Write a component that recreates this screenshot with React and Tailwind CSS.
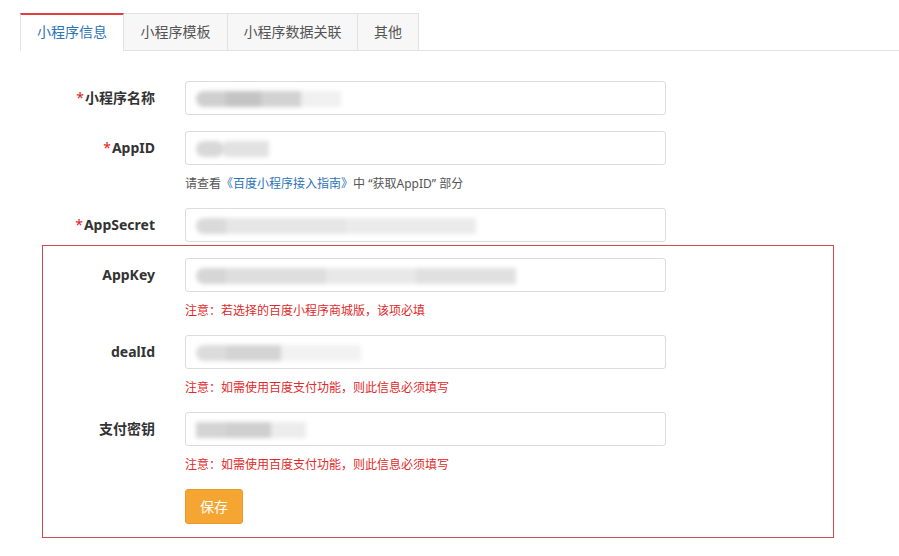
import React from 'react';

const font = { fontFamily: '"Noto Sans", "Noto Sans CJK SC", sans-serif' };

const tabs = [
    { name: '小程序信息', w: 'w-[104px]', active: true },
    { name: '小程序模板', w: 'w-[104px]' },
    { name: '小程序数据关联', w: 'w-[130px]' },
    { name: '其他', w: 'w-[61px]' },
];

// blurred placeholder for masked values
const Masked = ({ bars }) => (
    <div className="absolute left-[10px] top-[9px] flex items-center blur-[2px]">
        {bars.map((b, i) => (
            <div key={i} className={`h-[16px] ${b}`} />
        ))}
    </div>
);

const Row = ({ label, required, labelW, bars, help, helpClass, last }) => (
    <div className={last ? '' : help ? 'mb-[14px]' : 'mb-[16px]'}>
        <div className="flex items-center">
            <div className={`${labelW} shrink-0 text-right text-[14px] font-bold text-[#333] leading-5`}>
                {required && <span className="text-[#e02020] font-normal mr-[1px]">*</span>}
                {label}
            </div>
            <div className="relative ml-[30px] h-[34px] w-[481px] rounded-[3px] border border-[#dcdcdc] bg-white">
                <Masked bars={bars} />
            </div>
        </div>
        {help && (
            <div className={`mt-[9px] text-[12px] leading-5 ${helpClass}`} style={{ marginLeft: 'calc(var(--lw) + 30px)' }}>
                {help}
            </div>
        )}
    </div>
);

export default function App() {
    return (
        <div className="min-h-[556px] w-[899px] bg-white pt-[13px]" style={font}>
            <div className="ml-[20px] flex border-b border-[#e2e2e2]">
                {tabs.map((t) =>
                    t.active ? (
                        <div
                            key={t.name}
                            className={`${t.w} -mb-px h-[38px] border-x border-t-2 border-x-[#e2e2e2] border-t-[#e0403f] bg-white text-center text-[14px] leading-[34px] text-[#2c74b8]`}
                        >
                            {t.name}
                        </div>
                    ) : (
                        <div
                            key={t.name}
                            className={`${t.w} h-[37px] border-r border-t border-[#e2e2e2] bg-[#f7f7f7] text-center text-[14px] leading-[36px] text-[#555]`}
                        >
                            {t.name}
                        </div>
                    )
                )}
            </div>

            <div className="mt-[30px] pl-[20px]" style={{ '--lw': '135px' }}>
                <Row
                    required
                    label="小程序名称"
                    labelW="w-[135px]"
                    bars={['w-[30px] bg-[#cfcfcf] rounded-l-full', 'w-[35px] bg-[#c4c4c4]', 'w-[40px] bg-[#d2d2d2]', 'w-[40px] bg-[#f0f0f0]']}
                />
                <Row
                    required
                    label="AppID"
                    labelW="w-[135px]"
                    bars={['w-[28px] bg-[#d8d8d8] rounded-full', 'w-[45px] bg-[#e2e2e2]']}
                    help={
                        <span className="text-[#555]">
                            请查看<span className="text-[#2c74b8]">《百度小程序接入指南》</span>中 “获取AppID” 部分
                        </span>
                    }
                />
                <Row
                    required
                    label="AppSecret"
                    labelW="w-[135px]"
                    bars={['w-[30px] bg-[#dadada] rounded-l-full', 'w-[120px] bg-[#e6e6e6]', 'w-[130px] bg-[#ebebeb]']}
                    last
                />

                <div className="ml-[22px] mt-[3px] w-[792px] border border-[#cf4a50] pb-[13px] pt-[12px]" style={{ '--lw': '112px' }}>
                    <Row
                        label="AppKey"
                        labelW="w-[112px]"
                        bars={['w-[30px] bg-[#d6d6d6] rounded-l-full', 'w-[100px] bg-[#dedede]', 'w-[90px] bg-[#e8e8e8]', 'w-[100px] bg-[#e0e0e0]']}
                        help="注意：若选择的百度小程序商城版，该项必填"
                        helpClass="text-[#e02a2a]"
                    />
                    <Row
                        label="dealId"
                        labelW="w-[112px]"
                        bars={['w-[30px] bg-[#dcdcdc] rounded-l-full', 'w-[55px] bg-[#d4d4d4]', 'w-[80px] bg-[#f2f2f2]']}
                        help="注意：如需使用百度支付功能，则此信息必须填写"
                        helpClass="text-[#e02a2a]"
                    />
                    <Row
                        label="支付密钥"
                        labelW="w-[112px]"
                        bars={['w-[30px] bg-[#d4d4d4]', 'w-[45px] bg-[#cfcfcf]', 'w-[35px] bg-[#ececec]']}
                        help="注意：如需使用百度支付功能，则此信息必须填写"
                        helpClass="text-[#e02a2a]"
                    />
                    <div className="ml-[142px] mt-[14px]">
                        <button className="h-[35px] w-[58px] rounded-[3px] border border-[#eb9a2a] bg-[#f5a632] text-[14px] text-white">
                            保存
                        </button>
                    </div>
                </div>
            </div>
        </div>
    );
}
